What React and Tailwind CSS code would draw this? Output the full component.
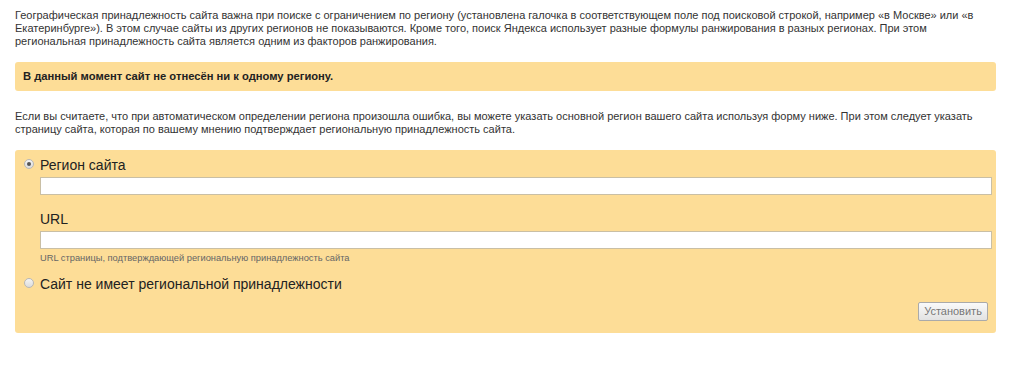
import React, { useState } from 'react';

const font = { fontFamily: '"Liberation Sans", Arial, sans-serif' };

const Radio = ({ checked, onChange }) => (
  <button
    type="button"
    onClick={onChange}
    className="mt-[2px] flex h-[10px] w-[10px] shrink-0 items-center justify-center rounded-full border border-[#b8b8b8] bg-gradient-to-b from-[#f4f4f4] to-[#dcdcdc]"
  >
    {checked && <span className="h-[4px] w-[4px] rounded-full bg-[#555]" />}
  </button>
);

export default function App() {
  const [mode, setMode] = useState('region');
  const [region, setRegion] = useState('');
  const [url, setUrl] = useState('');

  return (
    <div className="min-h-[372px] bg-white px-[15px] pt-[9px] text-[#333]" style={font}>
      {/* Intro */}
      <p className="pr-[28px] text-[11px] leading-[13px]">
        Географическая принадлежность сайта важна при поиске с ограничением по региону (установлена галочка в соответствующем поле под поисковой строкой, например «в Москве» или «в Екатеринбурге»). В этом случае сайты из других регионов не показываются. Кроме того, поиск Яндекса использует разные формулы ранжирования в разных регионах. При этом региональная принадлежность сайта является одним из факторов ранжирования.
      </p>

      {/* Current status */}
      <div className="mt-[14px] mr-[13px] flex h-[29px] items-center rounded-[3px] bg-[#fddd97] px-[8px] text-[11.2px] font-bold text-[#222]">
        В данный момент сайт не отнесён ни к одному региону.
      </div>

      <p className="mt-[19px] pr-[28px] text-[11px] leading-[13px]">
        Если вы считаете, что при автоматическом определении региона произошла ошибка, вы можете указать основной регион вашего сайта используя форму ниже. При этом следует указать страницу сайта, которая по вашему мнению подтверждает региональную принадлежность сайта.
      </p>

      {/* Form */}
      <div className="mt-[14px] mr-[13px] rounded-[3px] bg-[#fddd97] pt-[7px] pr-[4px] pb-[12px] pl-[9px]">
        <div className="flex gap-[6px]">
          <Radio checked={mode === 'region'} onChange={() => setMode('region')} />
          <div className="flex-1">
            <div className="text-[14px] leading-[16px] text-[#222]">Регион сайта</div>
            <input
              value={region}
              onChange={(e) => setRegion(e.target.value)}
              className="mt-[4px] block h-[18px] w-full border border-[#c9bfa5] bg-white px-[3px] text-[12px] outline-none"
            />
            <div className="mt-[16px] text-[14px] leading-[16px] text-[#222]">URL</div>
            <input
              value={url}
              onChange={(e) => setUrl(e.target.value)}
              className="mt-[4px] block h-[18px] w-full border border-[#c9bfa5] bg-white px-[3px] text-[12px] outline-none"
            />
            <div className="mt-[3px] text-[9.3px] leading-[12px] text-[#666]">
              URL страницы, подтверждающей региональную принадлежность сайта
            </div>
          </div>
        </div>

        <div className="mt-[12px] flex gap-[6px]">
          <Radio checked={mode === 'none'} onChange={() => setMode('none')} />
          <div className="text-[14px] leading-[16px] text-[#222]">Сайт не имеет региональной принадлежности</div>
        </div>

        <div className="mt-[10px] flex justify-end pr-[4px]">
          <button className="h-[19px] w-[70px] rounded-[2px] border border-[#aaa] bg-gradient-to-b from-[#fafafa] to-[#e2e2e2] text-[11px] leading-[17px] text-[#777]">
            Установить
          </button>
        </div>
      </div>
    </div>
  );
}
